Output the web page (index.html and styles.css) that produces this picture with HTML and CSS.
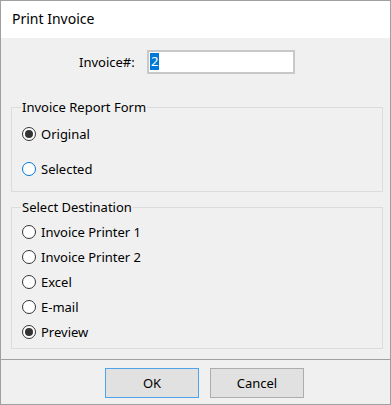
FILE: index.html
```html
<!DOCTYPE html>
<html lang="en">
<head>
    <meta charset="UTF-8">
    <meta name="viewport" content="width=device-width, initial-scale=1.0">
    <title>Print Invoice</title>
    <link rel="stylesheet" href="styles.css">
</head>
<body>
    <div class="window">
        <div class="titlebar">Print Invoice</div>
        <div class="content">
            <div class="invoice-row">
                <span class="label">Invoice#:</span>
                <div class="textbox"><span class="sel">2</span></div>
            </div>

            <fieldset class="group group-form">
                <legend>Invoice Report Form</legend>
                <div class="option option-tall"><span class="radio checked"></span>Original</div>
                <div class="option option-tall"><span class="radio focus"></span>Selected</div>
            </fieldset>

            <fieldset class="group group-dest">
                <legend>Select Destination</legend>
                <div class="option"><span class="radio"></span>Invoice Printer 1</div>
                <div class="option"><span class="radio"></span>Invoice Printer 2</div>
                <div class="option"><span class="radio"></span>Excel</div>
                <div class="option"><span class="radio"></span>E-mail</div>
                <div class="option"><span class="radio checked"></span>Preview</div>
            </fieldset>
        </div>
        <div class="footer">
            <button class="btn btn-default">OK</button>
            <button class="btn">Cancel</button>
        </div>
    </div>
</body>
</html>
```

FILE: styles.css
```css
* {
    box-sizing: border-box;
}
body {
    margin: 0;
    font-family: "Noto Sans", "Open Sans", sans-serif;
    font-size: 13px;
    color: #000;
    background: #f0f0f0;
}
.window {
    width: 391px;
    height: 405px;
    border: 1px solid #a0a0a0;
    background: #f0f0f0;
    display: flex;
    flex-direction: column;
}
.titlebar {
    height: 37px;
    background: #fff;
    padding-left: 11px;
    font-size: 14px;
    line-height: 36px;
}
.content {
    padding: 12px 7px 0 10px;
}
.invoice-row {
    display: flex;
    align-items: center;
    height: 24px;
    padding-left: 68px;
}
.label {
    width: 68px;
}
.textbox {
    width: 148px;
    height: 24px;
    background: #fff;
    border: 2px solid #c8c8c8;
    padding: 1px 0 0 1px;
    line-height: 17px;
}
.sel {
    display: inline-block;
    background: #0078d7;
    color: #fff;
    padding: 0 1px;
}
.group {
    margin: 0;
    padding: 0 10px;
    border: 1px solid #dcdcdc;
    width: 372px;
}
.group legend {
    padding: 0 1px;
    margin-left: -1px;
    line-height: 16px;
}
.group-form {
    margin-top: 25px;
    padding-bottom: 12px;
}
.group-form .option:first-of-type {
    margin-top: 9px;
}
.group-dest {
    margin-top: 7px;
    padding-bottom: 4px;
}
.group-dest .option:first-of-type {
    margin-top: 4px;
}
.option {
    display: flex;
    align-items: center;
    height: 25px;
}
.option-tall {
    height: 20px;
    margin-top: 15px;
}
.radio {
    width: 14px;
    height: 14px;
    border: 1px solid #333;
    border-radius: 50%;
    background: #fff;
    margin-right: 5px;
    display: flex;
    align-items: center;
    justify-content: center;
}
.radio.checked::after {
    content: "";
    width: 8px;
    height: 8px;
    border-radius: 50%;
    background: #333;
}
.radio.focus {
    border-color: #0078d7;
}
.footer {
    margin-top: 10px;
    border-top: 1px solid #a0a0a0;
    flex: 1;
    padding: 8px 0 0 104px;
    display: flex;
    gap: 11px;
}
.btn {
    width: 94px;
    height: 30px;
    background: #e1e1e1;
    border: 1px solid #adadad;
    font-family: inherit;
    font-size: 13px;
    color: #000;
    padding: 0;
}
.btn-default {
    border-color: #4fa3e8;
}
```
